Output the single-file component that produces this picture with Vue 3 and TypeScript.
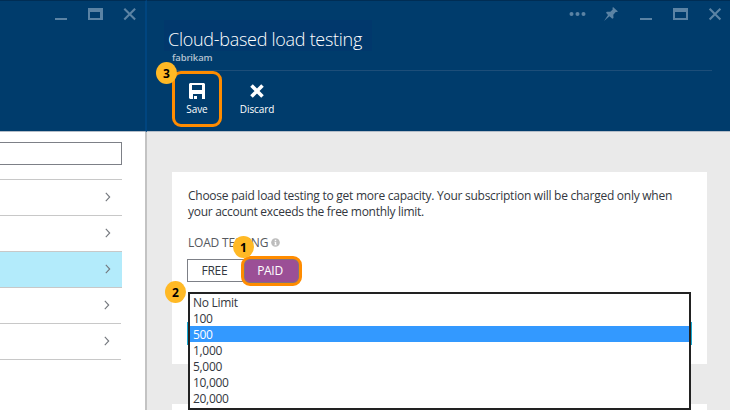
<script setup lang="ts">
import { ref } from 'vue'

interface Row { id: number; short: boolean }

const rows: Row[] = [
  { id: 0, short: false },
  { id: 1, short: false },
  { id: 2, short: false },
  { id: 3, short: true },
  { id: 4, short: true },
]
const activeRow = ref(2)
const limits: string[] = ['No Limit', '100', '500', '1,000', '5,000', '10,000', '20,000']
const selected = ref('500')
</script>

<template>
  <div class="portal">
    <section class="blade list-blade">
      <header class="head">
        <div class="controls">
          <svg class="ctl" viewBox="0 0 16 16"><path class="bar" d="M3 12h12v2H3z" /></svg>
          <svg class="ctl" viewBox="0 0 16 16"><path class="bar" fill-rule="evenodd" d="M1 2h15v12H1zM3 6v6h10V6z" /></svg>
          <svg class="ctl" viewBox="0 0 16 16"><path class="cross" d="M2.3 2.8l10.8 10.8M13.1 2.8L2.3 13.6" /></svg>
        </div>
      </header>
      <div class="list-body">
        <div class="filter"></div>
        <ul class="rows">
          <li v-for="row in rows" :key="row.id" class="row" :class="{ active: row.id === activeRow, short: row.short }" @click="activeRow = row.id">
            <svg class="chevron" viewBox="0 0 6 10"><path d="M.8 .9L4.7 5 .8 9.1" /></svg>
          </li>
        </ul>
      </div>
    </section>

    <section class="blade detail-blade">
      <header class="head">
        <div class="controls wide">
          <svg class="ctl dots" viewBox="0 0 18 16"><circle cx="3.5" cy="8" r="2" /><circle cx="9.5" cy="8" r="2" /><circle cx="15.5" cy="8" r="2" /></svg>
          <svg class="ctl" viewBox="0 0 16 16"><path class="bar" d="M10 1l5 4.5-1.3.6-1-.1-2.4 2.7.2 3.3-1.2.8-2.8-2.5L1 15l4-6-2-2.3.9-1 3.5.1 2.3-2.4L9.5 2z" /></svg>
          <svg class="ctl" viewBox="0 0 16 16"><path class="bar" d="M2 12h12v2H2z" /></svg>
          <svg class="ctl" viewBox="0 0 16 16"><path class="bar" fill-rule="evenodd" d="M0 2h15v12H0zM2 6v6h11V6z" /></svg>
          <svg class="ctl" viewBox="0 0 16 16"><path class="cross" d="M1.6 2.8l10.8 10.8M12.4 2.8L1.6 13.6" /></svg>
        </div>
        <h1 class="title"><span>Cloud-based load testing</span></h1>
        <div class="subtitle">fabrikam</div>
        <div class="commands">
          <button class="command marked">
            <svg class="glyph" viewBox="0 0 16 16"><path fill-rule="evenodd" d="M1 0h14l1 1v15h-3v-5H4v5H1l-1-1V1zM3 2v5h10V2zM5 13h3v3H5z" /></svg>
            <span>Save</span>
            <i class="badge b3">3</i>
          </button>
          <button class="command discard">
            <svg class="glyph" viewBox="0 0 16 16"><path class="thick" d="M2.5 2.5l11 11M13.5 2.5l-11 11" /></svg>
            <span>Discard</span>
          </button>
        </div>
      </header>
      <div class="detail-body">
        <div class="card">
          <p class="intro"><span class="first">Choose paid load testing to get more capacity. Your subscription will be charged only when</span><br><span class="second">your account exceeds the free monthly limit.</span></p>
          <div class="label"><span>LOAD TESTING</span>
            <svg class="info" viewBox="0 0 10 10"><circle cx="5" cy="5" r="4.8" /><path d="M4.2 2h1.6v1.4H4.2zM3.8 4.2h2v3.1h.6V8H3.7v-.7h.6V5h-.5z" /></svg>
          </div>
          <div class="toggle">
            <button class="free"><span>FREE</span></button>
            <button class="paid"><span>PAID</span><i class="badge b1">1</i></button>
          </div>
          <div class="combo">
            <i class="badge b2">2</i>
            <ul class="options">
              <li v-for="limit in limits" :key="limit" :class="{ chosen: limit === selected }" @click="selected = limit">{{ limit }}</li>
            </ul>
          </div>
        </div>
        <div class="card next"></div>
      </div>
    </section>
  </div>
</template>

<style>
body { margin: 0; overflow: hidden; }
</style>

<style scoped>
* { box-sizing: border-box; }
.portal {
  display: flex;
  width: 730px;
  height: 410px;
  overflow: hidden;
  background: #fff;
  font-family: "Open Sans", "Noto Sans", sans-serif;
  color: #333740;
}
ul { list-style: none; margin: 0; padding: 0; }
button { font: inherit; padding: 0; margin: 0; border: 0; background: none; color: inherit; }
.blade { height: 410px; display: flex; flex-direction: column; }
.list-blade { width: 147px; flex: none; }
.detail-blade { width: 583px; flex: none; }
.head { height: 132px; flex: none; background: #003c6c; border-top: 1px solid #002d54; border-bottom: 1px solid #b4bdc8; }
.list-blade .head { border-right: 2px solid #00457f; }
.controls { display: flex; gap: 19px; padding: 5px 0 0 52px; height: 21px; }
.controls.wide { padding-left: 421px; }
.ctl { width: 16px; height: 16px; flex: none; overflow: visible; }
.ctl.dots { width: 18px; margin-right: -2px; }
.bar, .dots circle { fill: #5b83a4; }
.cross { stroke: #5b83a4; stroke-width: 2.1; fill: none; }
.list-body { flex: 1; border-right: 2px solid #c3c3c3; padding-top: 10px; }
.filter { width: 122px; height: 23px; border: 1px solid #7d8087; border-left: 0; margin-bottom: 14px; }
.rows { border-top: 1px solid #c8c8c8; width: 122px; }
.row { height: 36px; border-bottom: 1px solid #c8c8c8; display: flex; align-items: center; justify-content: flex-end; padding: 0 11px 1px 0; }
.row.short { width: 121px; }
.row.active { background: #b3ebfb; }
.chevron { width: 6px; height: 10px; }
.chevron path { fill: none; stroke: #73777d; stroke-width: 1.1; }
.title { margin: -2px 0 0 17px; width: 208px; height: 31px; padding: 7px 0 0 4px; background: #01386c; font-family: "Open Sans", sans-serif; font-weight: 300; font-size: 18px; line-height: 25px; color: #fff; white-space: nowrap; letter-spacing: -.28px; }
.subtitle { margin-left: 25px; height: 19px; font-size: 9.5px; line-height: 14px; font-weight: 600; color: #b3c2d1; letter-spacing: -.15px; }
.commands { margin: 0 18px 0 25px; border-top: 1px solid #1d4e79; display: flex; gap: 9px; color: #fff; }
.command { position: relative; display: flex; flex-direction: column; align-items: center; height: 56px; width: 50px; padding-top: 12px; font-size: 10px; line-height: 14px; letter-spacing: -.1px; }
.marked { border: 3px solid #ff8c00; border-radius: 9px; padding-top: 9px; }
.command span { margin-top: -1px; }
.discard { width: 52px; }
.glyph { width: 16px; height: 16px; margin-bottom: 4px; fill: #fff; flex: none; }
.thick { stroke: #fff; stroke-width: 3.6; }
.badge { position: absolute; width: 21px; height: 22px; border-radius: 50%; background: #ffb925; color: #000; font: bold 12px/23px "Open Sans", sans-serif; text-align: center; letter-spacing: 0; }
.b3 { left: -19px; top: -12px; }
.detail-body { flex: 1; background: #eaeaea; padding: 40px 23px 0 25px; display: flex; flex-direction: column; gap: 40px; min-height: 0; }
.card { height: 192px; flex: none; background: #fff; padding: 16px 15px 0; }
.card.next { height: 20px; }
.intro { margin: 0 0 14px 1px; font-size: 12px; line-height: 16px; white-space: nowrap; }
.first { letter-spacing: -.255px; }
.second { letter-spacing: -.29px; }
.label { margin-left: 1px; height: 25px; display: flex; font-size: 12px; line-height: 17px; color: #55585e; font-weight: 400; letter-spacing: -.2px; }
.info { width: 9px; height: 9px; margin: 4px 0 0 3px; }
.info circle { fill: #bdbdbd; }
.info path { fill: #fff; }
.toggle { display: flex; height: 23px; margin-bottom: 40px; font-size: 12px; line-height: 21px; }
.free { width: 57px; height: 23px; border: 1px solid #7d8087; letter-spacing: -.2px; padding-right: 2px; }
.paid { position: relative; width: 61px; height: 30px; margin: -3px 0 0 -3px; border: 3px solid #ff8c00; border-radius: 9px; background: #9b4f96; color: #fff; box-shadow: inset 0 0 0 1px #84717f; letter-spacing: -.3px; padding: 0 3px 2px 0; }
.b1 { left: -11px; top: -23px; }
.combo { position: relative; width: 505px; height: 23px; border: 1px solid #16a9d4; }
.b2 { left: -23px; top: -42px; }
.options { position: absolute; left: 0; top: -31px; width: 503px; height: 118px; border: 2px solid #222; background: #fff; font-size: 12px; line-height: 17px; letter-spacing: -.3px; }
.options li { height: 16px; padding-left: 3px; }
.options .chosen { background: #3399ff; color: #fff; }
</style>
